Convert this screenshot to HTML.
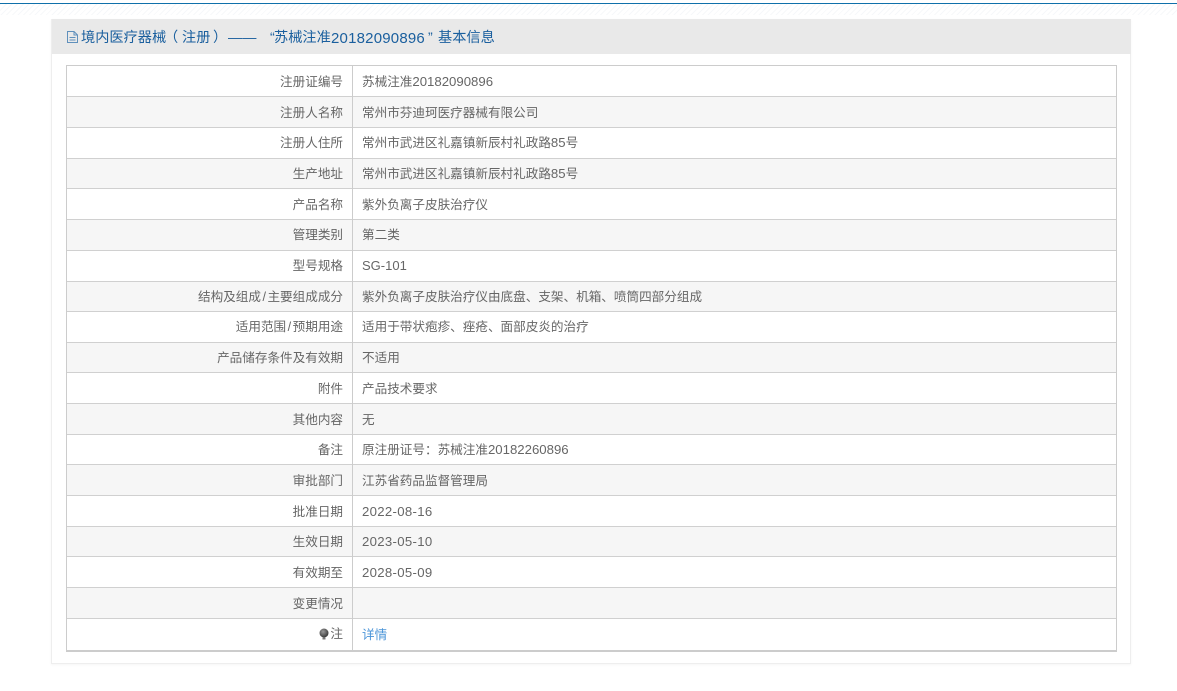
<!DOCTYPE html>
<html lang="zh">
<head>
<meta charset="utf-8">
<style>
html,body{margin:0;padding:0;background:#fff;width:1177px;height:691px;overflow:hidden}
body{position:relative;font-family:"Liberation Sans","Noto Sans CJK SC",sans-serif;font-size:12.6px;color:#666}
.abs{position:absolute}
#topline{left:0;top:3px;width:1177px;height:1px;background:#0f70aa}
#hatch{left:0;top:4px;width:1177px;height:11px;background:repeating-linear-gradient(135deg,#eef1f4 0 1px,#fff 1px 4px);opacity:.5}
#panel{left:51px;top:19px;width:1080px;height:645px;border:1px solid #eee;background:#fff;box-sizing:border-box;box-shadow:0 1px 2px rgba(0,0,0,.04)}
#head{left:52px;top:19px;width:1079px;height:35px;background:#e9e9e9}
.t{position:absolute;top:21px;height:35px;line-height:35px;font-size:14.2px;color:#1a5f9e;white-space:nowrap}
#ico{left:66px;top:30px}
#tbl{left:66px;top:65px;width:1051px;height:587px;box-sizing:border-box;border:1px solid #ccc;border-bottom:2px solid #ccc;background:#fff}
.r{position:absolute;left:67px;width:1049px;border-bottom:1px solid #d0d0d0;box-sizing:border-box}
.alt{background:#f6f6f6}
.k,.v{position:absolute;white-space:nowrap;line-height:20px;color:#666}
.k{right:834px;text-align:right}
.v{left:362px}
.d{font-size:13.2px}
.e{font-size:13.2px;letter-spacing:.3px}
.s{padding:0 1.5px}
.c{font-family:"Liberation Sans","Noto Sans CJK TC",sans-serif}
#sep{left:352px;top:66px;width:1px;height:585px;background:#ccc}
a{color:#4a94d8;text-decoration:none}
</style>
</head>
<body>
<div class="abs" id="topline"></div>
<div class="abs" id="hatch"></div>
<div class="abs" id="panel"></div>
<div class="abs" id="head"></div>
<svg class="abs" id="ico" width="13" height="14" viewBox="0 0 13 14" fill="none" stroke="#5f90bc" stroke-width="1"><path d="M1.500 1.500H8L11.500 5V12.500H1.500Z"/><path d="M8 1.500V5H11.500M3.500 7.500H9.500M3.500 10H9.500"/></svg>
<div class="t" style="left:81px">境内医疗器械</div>
<div class="t" style="left:164px">（</div>
<div class="t" style="left:182px">注册</div>
<div class="t" style="left:213px">）</div>
<div class="t" style="left:228px">——</div>
<div class="t" style="left:270px">“</div>
<div class="t" style="left:274px">苏械注准</div>
<div class="t" style="left:331px;font-size:15px;letter-spacing:.2px">20182090896</div>
<div class="t" style="left:428px">”</div>
<div class="t" style="left:438px">基本信息</div>
<div class="abs" id="tbl"></div>

<div class="r" style="top:66px;height:31px"></div>
<div class="r alt" style="top:97px;height:31px"></div>
<div class="r" style="top:128px;height:31px"></div>
<div class="r alt" style="top:159px;height:30px"></div>
<div class="r" style="top:189px;height:31px"></div>
<div class="r alt" style="top:220px;height:31px"></div>
<div class="r" style="top:251px;height:31px"></div>
<div class="r alt" style="top:282px;height:30px"></div>
<div class="r" style="top:312px;height:31px"></div>
<div class="r alt" style="top:343px;height:30px"></div>
<div class="r" style="top:373px;height:31px"></div>
<div class="r alt" style="top:404px;height:31px"></div>
<div class="r" style="top:435px;height:30px"></div>
<div class="r alt" style="top:465px;height:31px"></div>
<div class="r" style="top:496px;height:31px"></div>
<div class="r alt" style="top:527px;height:30px"></div>
<div class="r" style="top:557px;height:31px"></div>
<div class="r alt" style="top:588px;height:31px"></div>
<div class="abs" id="sep"></div>

<div class="k" style="top:72px">注册证编号</div><div class="v" style="top:72px">苏械注准<span class="d">20182090896</span></div>
<div class="k" style="top:103px">注册人名称</div><div class="v" style="top:103px">常州市芬迪珂医疗器械有限公司</div>
<div class="k" style="top:133px">注册人住所</div><div class="v" style="top:133px">常州市武进区礼嘉镇新辰村礼政路<span class="d">85</span>号</div>
<div class="k" style="top:164px">生产地址</div><div class="v" style="top:164px">常州市武进区礼嘉镇新辰村礼政路<span class="d">85</span>号</div>
<div class="k" style="top:195px">产品名称</div><div class="v" style="top:195px">紫外负离子皮肤治疗仪</div>
<div class="k" style="top:225px">管理类别</div><div class="v" style="top:225px">第二类</div>
<div class="k" style="top:256px">型号规格</div><div class="v" style="top:256px"><span style="font-size:13px">SG-101</span></div>
<div class="k" style="top:287px">结构及组成<span class="s">/</span>主要组成成分</div><div class="v" style="top:287px">紫外负离子皮肤治疗仪由底盘、支架、机箱、喷筒四部分组成</div>
<div class="k" style="top:317px">适用范围<span class="s">/</span>预期用途</div><div class="v" style="top:317px">适用于带状疱疹、痤疮、面部皮炎的治疗</div>
<div class="k" style="top:348px">产品储存条件及有效期</div><div class="v" style="top:348px">不适用</div>
<div class="k" style="top:379px">附件</div><div class="v" style="top:379px">产品技术要求</div>
<div class="k" style="top:410px">其他内容</div><div class="v" style="top:410px">无</div>
<div class="k" style="top:440px">备注</div><div class="v" style="top:440px">原注册证号<span class="c">：</span>苏械注准<span class="d">20182260896</span></div>
<div class="k" style="top:471px">审批部门</div><div class="v" style="top:471px">江苏省药品监督管理局</div>
<div class="k" style="top:502px">批准日期</div><div class="v" style="top:502px"><span class="e">2022-08-16</span></div>
<div class="k" style="top:532px">生效日期</div><div class="v" style="top:532px"><span class="e">2023-05-10</span></div>
<div class="k" style="top:563px">有效期至</div><div class="v" style="top:563px"><span class="e">2028-05-09</span></div>
<div class="k" style="top:594px">变更情况</div>
<svg class="abs" style="left:319px;top:628px" width="11" height="13" viewBox="0 0 11 13"><defs><radialGradient id="b" cx=".4" cy=".35" r=".7"><stop offset="0" stop-color="#999"/><stop offset="1" stop-color="#333"/></radialGradient></defs><circle cx="5" cy="5" r="4.500" fill="url(#b)"/><rect x="3.500" y="9.500" width="3" height="2" fill="#777"/></svg>
<div class="k" style="top:624px">注</div><div class="v" style="top:625px"><a href="#">详情</a></div>
</body>
</html>
